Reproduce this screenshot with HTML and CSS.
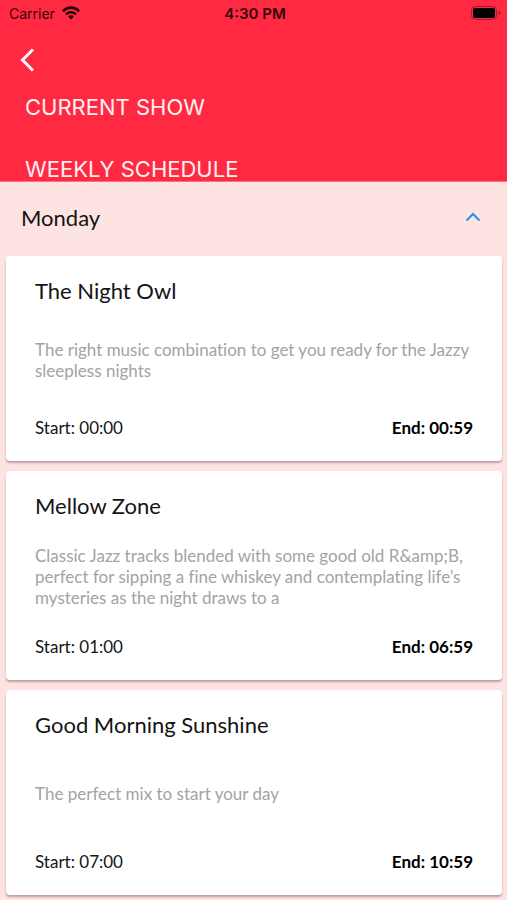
FILE: index.html
```html
<!DOCTYPE html>
<html lang="en">
<head>
<meta charset="utf-8">
<meta name="viewport" content="width=device-width, initial-scale=1">
<title>Weekly Schedule</title>
<link rel="stylesheet" href="styles.css">
</head>
<body>
<header class="header">
  <div class="status">
    <div class="carrier">
      <span>Carrier</span>
      <svg class="wifi" viewBox="0 0 18 14" aria-hidden="true">
        <path d="M0 4.4C5-1.1 13-1.1 18 4.4L16.2 6.2C12.2 1.9 5.8 1.9 1.8 6.2Z"/>
        <path d="M3.1 7.5c3.3-3.5 8.5-3.5 11.8 0l-1.8 1.8c-2.3-2.4-5.9-2.4-8.2 0Z"/>
        <path d="M6.1 10.6c1.6-1.7 4.2-1.7 5.8 0L9 13.6Z"/>
      </svg>
    </div>
    <span class="clock">4:30 PM</span>
    <svg class="battery" viewBox="0 0 30 14" aria-hidden="true">
      <rect class="shell" x="0.5" y="0.5" width="25" height="13" rx="4"/>
      <rect x="2" y="2" width="22" height="10" rx="2"/>
      <path class="tip" d="M27.5 5v4q2-.7 2-2t-2-2Z"/>
    </svg>
  </div>
  <button class="back" type="button" aria-label="Back">
    <svg viewBox="0 0 14 24" aria-hidden="true"><path d="M12.5 1.5L2 12L12.5 22.5"/></svg>
  </button>
  <h2 class="section">CURRENT SHOW</h2>
  <h2 class="section">WEEKLY SCHEDULE</h2>
</header>
<main class="schedule">
  <button class="day" type="button" aria-expanded="true">
    <span>Monday</span>
    <svg viewBox="0 0 16 10" aria-hidden="true"><path d="M1.5 8.5L8 2L14.5 8.5"/></svg>
  </button>
  <div class="shows">
    <article class="card">
      <h3 class="title">The Night Owl</h3>
      <div class="about"><p>The right music combination to get you ready for the Jazzy sleepless nights</p></div>
      <div class="times"><span>Start: 00:00</span><strong>End: 00:59</strong></div>
    </article>
    <article class="card">
      <h3 class="title">Mellow Zone</h3>
      <div class="about"><p>Classic Jazz tracks blended with some good old R&amp;amp;B, perfect for sipping a fine whiskey and contemplating life’s mysteries as the night draws to a</p></div>
      <div class="times"><span>Start: 01:00</span><strong>End: 06:59</strong></div>
    </article>
    <article class="card">
      <h3 class="title">Good Morning Sunshine</h3>
      <div class="about"><p>The perfect mix to start your day</p></div>
      <div class="times"><span>Start: 07:00</span><strong>End: 10:59</strong></div>
    </article>
  </div>
</main>
</body>
</html>
```
FILE: styles.css
```css
* {
  box-sizing: border-box;
}

body {
  margin: 0;
  background: #fee3e3;
  color: #141414;
  font-family: Lato, sans-serif;
}

h2,
h3,
p {
  margin: 0;
  font-weight: 400;
}

button {
  border: 0;
  background: none;
  color: inherit;
  font: inherit;
  cursor: pointer;
}

.header {
  background: #ff2942;
  border-bottom: 1px solid #f9707f;
  color: #ffeff1;
  font-family: Inter, sans-serif;
}

.status {
  display: grid;
  grid-template-columns: 1fr auto 1fr;
  align-items: center;
  height: 28px;
  padding: 0 6px 2px 9px;
  color: #35060c;
  font-size: 14px;
}

.carrier {
  display: flex;
  align-items: center;
  gap: 7px;
}

.wifi {
  width: 18px;
  height: 14px;
  fill: #1c0306;
}

.clock {
  font-size: 15px;
  font-weight: 600;
}

.battery {
  justify-self: end;
  width: 30px;
  height: 14px;
  fill: #000;
}

.battery .shell {
  fill: none;
  stroke: #a31a2a;
}

.battery .tip {
  fill: #a31a2a;
}

.back {
  display: block;
  height: 64px;
  margin-bottom: 3px;
  padding: 0 20px;
}

.back svg {
  display: block;
  width: 15px;
  height: 24px;
  fill: none;
  stroke: #fff;
  stroke-width: 3;
}

.section {
  padding: 0 25px;
  font-size: 22px;
  line-height: 24px;
}

.section + .section {
  margin-top: 38px;
}

.day {
  display: flex;
  align-items: center;
  justify-content: space-between;
  width: 100%;
  height: 74px;
  padding: 0 26px 4px 21px;
  font-size: 22px;
}

.day svg {
  width: 16px;
  height: 10px;
  fill: none;
  stroke: #2d8fe5;
  stroke-width: 2;
}

.shows {
  display: grid;
  gap: 10px;
  padding: 0 5px 5px 6px;
}

.card {
  padding: 21px 29px;
  border-radius: 4px;
  background: #fff;
  box-shadow: 0 2px 2px rgba(80, 30, 40, 0.35);
}

.title {
  font-size: 22px;
  line-height: 28px;
}

.about {
  display: flex;
  align-items: center;
  min-height: 59px;
  margin: 25px 0 26px;
  color: #a3a3a3;
  font-size: 17px;
  font-variant-ligatures: none;
  line-height: 21px;
}

.times {
  display: flex;
  justify-content: space-between;
  font-size: 17px;
  line-height: 25px;
}

.times strong {
  color: #000;
  font-weight: 700;
}
```
